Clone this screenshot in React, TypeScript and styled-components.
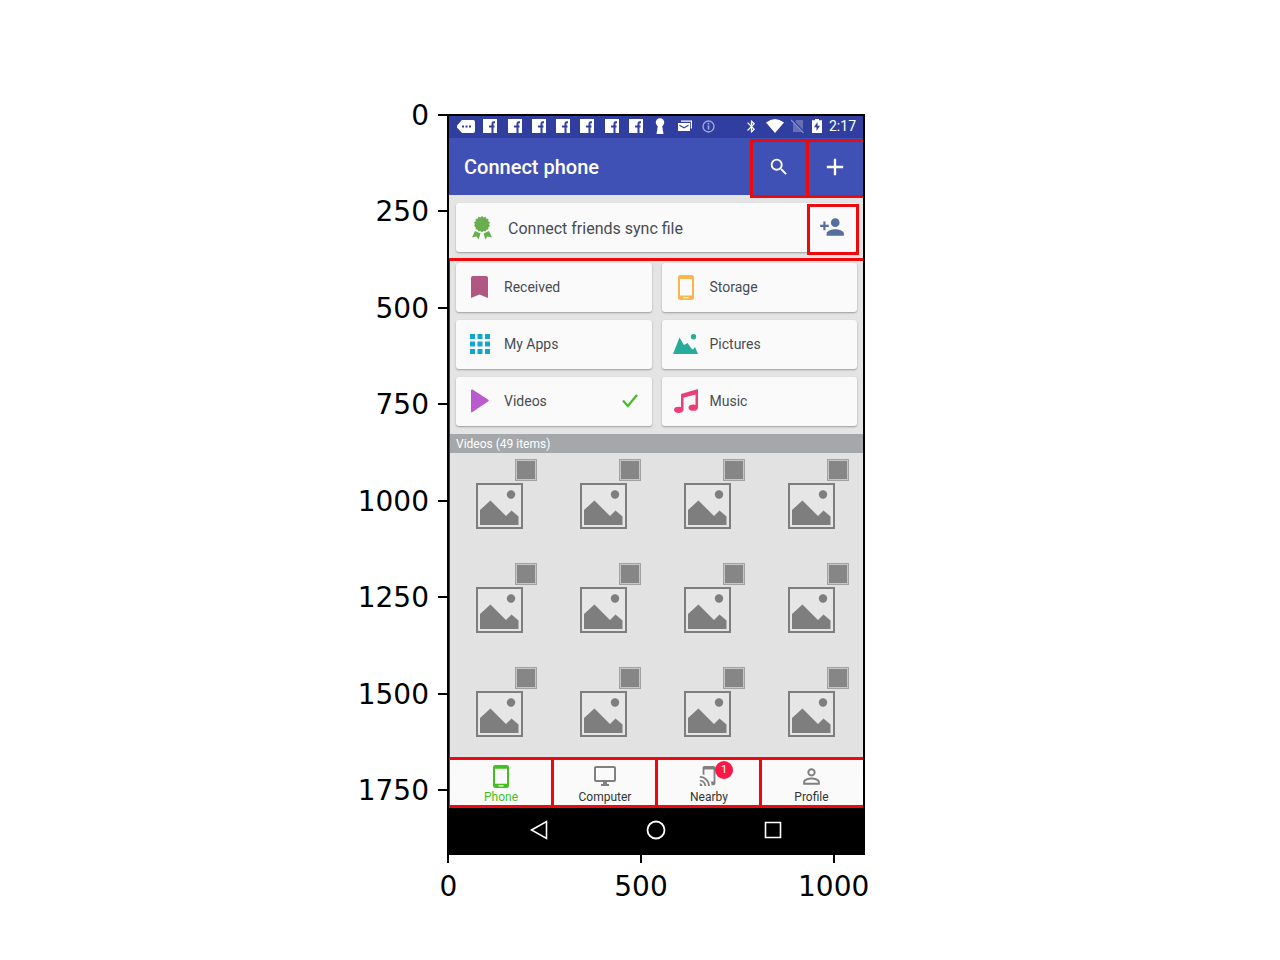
import React from 'react';
import styled, { createGlobalStyle } from 'styled-components';
import { MdAdd, MdBluetooth, MdOutlineDesktopWindows, MdPersonAdd, MdPersonOutline, MdSearch, MdTapAndPlay } from 'react-icons/md';

const MARK = '#ee0a0c';

const GlobalStyle = createGlobalStyle`
  *, *::before, *::after { box-sizing: border-box; }
  body { margin: 0; background: #fff; }
  svg { display: block; flex: none; }
  button { font: inherit; color: inherit; background: none; border: 0; padding: 0; cursor: pointer; }
`;

/* ---------- figure and axes ---------- */

const Figure = styled.main`
  display: grid;
  grid-template-columns: 1fr minmax(0, 418px) 1fr;
  padding: 114px 10% 56px 12.5%;
  font: 28px/28px 'DejaVu Sans', sans-serif;
  color: #000;
`;

const YAxis = styled.div`
  display: flex;
  flex-direction: column;
  margin-top: -12px;
  margin-bottom: 12px;
`;

const YTick = styled.div<{ $span: number }>`
  flex: ${(p) => p.$span} 0 0;
  display: flex;
  justify-content: flex-end;
  gap: 9px;
  &::after {
    content: '';
    width: 9px;
    height: 2px;
    margin-top: 12px;
    background: #000;
  }
`;

const XAxis = styled.div`
  grid-column: 2;
  display: flex;
  margin: 0 -65px 0 -95px;
`;

const XTick = styled.div`
  flex: 1;
  display: flex;
  flex-direction: column;
  align-items: center;
  gap: 10px;
  &::before {
    content: '';
    width: 2px;
    height: 8px;
    background: #000;
  }
`;

/* ---------- phone ---------- */

const Phone = styled.section`
  border: 2px solid #000;
  overflow: hidden;
  background: #e4e4e4;
  font: 14px/20px Roboto, sans-serif;
  color: #474c53;
`;

const StatusBar = styled.div`
  display: flex;
  align-items: center;
  justify-content: space-between;
  height: 22px;
  padding: 0 7px 2px 5px;
  background: #303f9f;
  color: #fff;
`;

const Notifications = styled.div`
  flex: 0 1 267px;
  display: grid;
  grid-template-columns: repeat(11, 1fr);
  place-items: center;
`;

const System = styled.div`
  display: flex;
  align-items: center;
  gap: 7px;
`;

const AppBar = styled.header`
  display: flex;
  align-items: flex-start;
  height: 57px;
  padding: 1px 0 0 15px;
  background: #3f51b5;
  color: #fff;
`;

const Title = styled.h1`
  flex: 1;
  margin: 0;
  font-size: 20px;
  line-height: 57px;
  font-weight: 500;
`;

const BarButton = styled.button<{ $last?: boolean }>`
  position: relative;
  display: grid;
  place-items: center;
  width: ${(p) => (p.$last ? 57 : 59)}px;
  height: 59px;
  margin-left: ${(p) => (p.$last ? -3 : 0)}px;
  padding: 0 2px 3px 0;
  border: 3px solid ${MARK};
  border-right-width: ${(p) => (p.$last ? 0 : 3)}px;
`;

const Card = styled.div`
  display: flex;
  align-items: center;
  height: 49px;
  border-radius: 3px;
  background: #fafafa;
  box-shadow: 0 1px 2px rgba(0, 0, 0, 0.32);
`;

const Friends = styled.div`
  padding: 8px 6px 6px 7px;
`;

const FriendsCard = styled(Card)`
  padding-left: 15px;
  font-size: 16px;
`;

const FriendsText = styled.span`
  flex: 1;
  padding: 2px 0 0 15px;
`;

const AddFriend = styled.button`
  display: grid;
  place-items: center;
  width: 52px;
  height: 51px;
  margin: 3px -2px 0 0;
  padding: 0 2px 4px 0;
  border: 3px solid ${MARK};
  color: #566f9c;
`;

const Library = styled.section`
  border-top: 3px solid ${MARK};
  border-left: 1px solid #8f1a1a;
`;

const Categories = styled.div`
  display: grid;
  grid-template-columns: 1fr 1fr;
  gap: 8px 10px;
  padding: 2px 6px 8px;
`;

const Category = styled(Card).attrs({ as: 'button' })`
  && {
    padding: 0 14px 1px 10px;
    background: #fafafa;
    text-align: left;
  }
`;

const IconSlot = styled.span<{ $tint?: string }>`
  display: grid;
  place-items: center;
  width: 28px;
  color: ${(p) => p.$tint ?? 'inherit'};
`;

const CategoryName = styled.span`
  flex: 1;
  padding-left: 10px;
`;

const GroupTitle = styled.h2`
  margin: 0;
  padding: 1px 6px 0;
  background: #a4a8ab;
  color: #fff;
  font-size: 12px;
  line-height: 18px;
  font-weight: 400;
`;

const Videos = styled.div`
  display: flex;
  flex-direction: column;
  gap: 34px;
  padding: 6px 14px 20px 26px;
  background: #e2e2e2;
`;

const VideoRow = styled.div`
  display: flex;
  justify-content: space-between;
`;

const Video = styled.label`
  display: flex;
  flex-direction: column;
  width: 61px;
  gap: 2px;
`;

const Tick = styled.input`
  appearance: none;
  align-self: flex-end;
  width: 22px;
  height: 22px;
  margin: 0;
  border: 1px solid #a2a2a2;
  background: #868686;
  box-shadow: inset 0 0 0 1px #c6c6c6;
`;

const Tabs = styled.nav`
  display: grid;
  grid-template-columns: 104px 1fr 1fr 101px;
  height: 51px;
  border: solid ${MARK};
  border-width: 3px 0 3px 1px;
  background: #fafafa;
`;

const Tab = styled.button<{ $active?: boolean }>`
  && {
    color: ${(p) => (p.$active ? '#43c01f' : '#333')};
    font-size: 12px;
    line-height: 14px;
  }
  display: flex;
  flex-direction: column;
  align-items: center;
  justify-content: space-between;
  padding: 3px 2px 1px 0;
  & + & { box-shadow: -3px 0 0 ${MARK}; }
`;

const TabIcon = styled.span<{ $active?: boolean }>`
  position: relative;
  display: grid;
  place-items: center;
  height: 26px;
  color: ${(p) => (p.$active ? '#43c01f' : '#808080')};
`;

const Badge = styled.span`
  position: absolute;
  top: -2px;
  left: 17px;
  width: 18px;
  border-radius: 50%;
  background: #fb1846;
  color: #fff;
  font-size: 11px;
  line-height: 18px;
  text-align: center;
`;

const SystemNav = styled.div`
  display: flex;
  justify-content: center;
  align-items: center;
  gap: 97px;
  height: 45px;
  padding-bottom: 2px;
  background: #000;
`;

/* ---------- drawings ---------- */

const Message = () => (
  <svg width="18" height="13" viewBox="0 0 18 13">
    <path d="M5 0h11q2 0 2 2v9q0 2-2 2H5L0 7.500v-2z" fill="#fff" />
    <path d="M5 5.500h2v2H5zm3.500 0h2v2h-2zm3.500 0h2v2h-2z" fill="#303f9f" />
  </svg>
);

const FacebookLogo = () => (
  <svg width="14" height="14" viewBox="0 0 14 14">
    <path d="M0 0h14v14H0z" fill="#fff" />
    <path d="M12 3.300h-1.300q-1.200 0-1.200 1.200V14M6 7.500h5.500" fill="none" stroke="#303f9f" strokeWidth="2" />
  </svg>
);

const Keyhole = () => (
  <svg width="10" height="16" viewBox="0 0 10 16" fill="#fff">
    <circle cx="5" cy="4.500" r="4.200" />
    <path d="M3 7h4l1.500 9h-7z" />
  </svg>
);

const Mail = () => (
  <svg width="14" height="12" viewBox="0 0 14 12">
    <path d="M3 .5h11v8h-1.200V1.700H3z" fill="#fff" />
    <path d="M0 3h12v8H0z" fill="#fff" />
    <path d="M1.500 5.300 6 7.800 10.500 5.300" fill="none" stroke="#303f9f" strokeWidth="1.100" />
  </svg>
);

const Info = () => (
  <svg width="13" height="13" viewBox="0 0 13 13" fill="none" stroke="#a5aedb" strokeWidth="1.300">
    <circle cx="6.500" cy="6.500" r="5.500" />
    <path d="M6.500 5.500v4M6.500 3v1.500" strokeWidth="1.600" />
  </svg>
);

const Wifi = () => (
  <svg width="18" height="14" viewBox="0 0 18 14">
    <path d="M0 3.500Q9-3.500 18 3.500L9 14z" fill="#fff" />
  </svg>
);

const NoSim = () => (
  <svg width="14" height="14" viewBox="0 0 14 14">
    <path d="M5.500 1H12v12H2V4.500z" fill="#6670b5" />
    <path d="M1 1l12 12.500" stroke="#303f9f" strokeWidth="2.500" />
    <path d="M0 1l12.500 13" stroke="#8a93cb" strokeWidth="1.200" />
  </svg>
);

const Battery = () => (
  <svg width="10" height="14" viewBox="0 0 10 14">
    <path d="M3 0h4v1.300h3V14H0V1.300h3z" fill="#fff" />
    <path d="M5.500 3 2 8.300h2.500V12L8 6.800H5.500z" fill="#303f9f" />
  </svg>
);

const badgePoints = Array.from({ length: 28 }, (_, i) => {
  const r = i % 2 ? 7 : 8.2;
  const a = (i * Math.PI) / 14;
  return `${(10 + r * Math.sin(a)).toFixed(2)},${(8.2 - r * Math.cos(a)).toFixed(2)}`;
}).join(' ');

const Award = () => (
  <svg width="22" height="24" viewBox="-1 0 22 24" fill="#68ae4e">
    <polygon points={badgePoints} />
    <path d="M3 15 8.500 17.500 6.500 23.500 4.500 20.500 0 21.500z" />
    <path d="M17 15 11.500 17.500 13.500 23.500 15.500 20.500 20 21.500z" />
  </svg>
);

const Bookmark = () => (
  <svg width="18" height="22" viewBox="0 0 18 22">
    <path d="M2 0h13q2 0 2 2v20l-8.500-3.500L0 22V2q0-2 2-2z" fill="#b05883" />
  </svg>
);

const Handset = ({ width = 16, height = 25 }: { width?: number; height?: number }) => (
  <svg width={width} height={height} viewBox="0 0 16 25" preserveAspectRatio="none">
    <path
      fillRule="evenodd"
      fill="currentColor"
      d="M2.500 0h11Q16 0 16 2.500v20q0 2.500-2.500 2.500h-11Q0 25 0 22.500v-20Q0 0 2.500 0zM2 4v16.500h12V4zM5.500 22v1.300h5V22z"
    />
  </svg>
);

const AppsGrid = () => (
  <svg width="20" height="20" viewBox="0 0 20 20" fill="#12a5cf">
    {[0, 7.5, 15].map((y) => [0, 7.5, 15].map((x) => <rect key={`${x}-${y}`} x={x} y={y} width="5" height="5" />))}
  </svg>
);

const Mountains = () => (
  <svg width="25" height="20" viewBox="0 0 25 20" fill="#27ac9b">
    <path d="M0 20 6.500 3.500 11 11 14.500 9 18.500 14.500 20 15.500 22 13 25 20z" />
    <circle cx="20.500" cy="2.700" r="2.700" />
  </svg>
);

const Play = () => (
  <svg width="18" height="24" viewBox="0 0 18 24">
    <path d="M0 1.500Q0 0 1.500 .5L17 10.500q1.500 1 0 2L1.500 23Q0 24 0 22.500z" fill="#ba5bcd" />
  </svg>
);

const Notes = () => (
  <svg width="24" height="24" viewBox="0 0 24 24" fill="#ea4078">
    <path d="M7 5 24 0v18.500h-2.500V5.500L9.500 8.800v12H7z" />
    <ellipse cx="4.700" cy="20.800" rx="4.700" ry="3.100" />
    <ellipse cx="19.200" cy="18.700" rx="4.700" ry="3.100" />
  </svg>
);

const Check = () => (
  <svg width="16" height="14" viewBox="0 0 16 14">
    <path d="M1 6.500 5.800 12 15 1" fill="none" stroke="#43c01f" strokeWidth="2.200" />
  </svg>
);

const Placeholder = () => (
  <svg width="47" height="46" viewBox="0 0 47 46">
    <rect x="1" y="1" width="45" height="44" fill="#e6e6e6" stroke="#7e7e7e" strokeWidth="2" />
    <path d="M4 27 14.500 17.500 30 33 35.500 27.500 42.500 33.500V42H4z" fill="#7e7e7e" />
    <circle cx="35" cy="11.500" r="4.200" fill="#7e7e7e" />
  </svg>
);

/* ---------- page ---------- */

const yTicks = [0, 250, 500, 750, 1000, 1250, 1500, 1750];
const xTicks = [0, 500, 1000];

const categories = [
  { name: 'Received', icon: <Bookmark /> },
  { name: 'Storage', icon: <Handset />, tint: '#f8b64c' },
  { name: 'My Apps', icon: <AppsGrid /> },
  { name: 'Pictures', icon: <Mountains /> },
  { name: 'Videos', icon: <Play />, selected: true },
  { name: 'Music', icon: <Notes /> },
];

export default function App() {
  return (
    <Figure>
      <GlobalStyle />
      <YAxis>
        {yTicks.map((t) => (
          <YTick key={t} $span={t === 1750 ? 170 : 250}>{t}</YTick>
        ))}
      </YAxis>
      <Phone>
        <StatusBar>
          <Notifications>
            <Message />
            {Array.from({ length: 7 }, (_, i) => <FacebookLogo key={i} />)}
            <Keyhole />
            <Mail />
            <Info />
          </Notifications>
          <System>
            <MdBluetooth size={15} />
            <Wifi />
            <NoSim />
            <Battery />
            <span>2:17</span>
          </System>
        </StatusBar>
        <AppBar>
          <Title>Connect phone</Title>
          <BarButton aria-label="Search"><MdSearch size={22} /></BarButton>
          <BarButton aria-label="Add" $last><MdAdd size={28} /></BarButton>
        </AppBar>
        <Friends>
          <FriendsCard>
            <Award />
            <FriendsText>Connect friends sync file</FriendsText>
            <AddFriend aria-label="Add friend"><MdPersonAdd size={26} /></AddFriend>
          </FriendsCard>
        </Friends>
        <Library>
          <Categories>
            {categories.map((c) => (
              <Category key={c.name}>
                <IconSlot $tint={c.tint}>{c.icon}</IconSlot>
                <CategoryName>{c.name}</CategoryName>
                {c.selected && <Check />}
              </Category>
            ))}
          </Categories>
          <GroupTitle>Videos (49 items)</GroupTitle>
          <Videos>
            {[0, 1, 2].map((row) => (
              <VideoRow key={row}>
                {[1, 2, 3, 4].map((n) => (
                  <Video key={n}>
                    <Tick type="checkbox" aria-label={`Select video ${row * 4 + n}`} />
                    <Placeholder />
                  </Video>
                ))}
              </VideoRow>
            ))}
          </Videos>
        </Library>
        <Tabs>
          <Tab $active><TabIcon $active><Handset width={16} height={23} /></TabIcon>Phone</Tab>
          <Tab><TabIcon><MdOutlineDesktopWindows size={24} /></TabIcon>Computer</Tab>
          <Tab><TabIcon><MdTapAndPlay size={22} /><Badge>1</Badge></TabIcon>Nearby</Tab>
          <Tab><TabIcon><MdPersonOutline size={25} /></TabIcon>Profile</Tab>
        </Tabs>
        <SystemNav>
          <button aria-label="Back">
            <svg width="20" height="20" viewBox="0 0 20 20"><path d="M2.500 10 17.500 1.500v17z" fill="none" stroke="#fff" strokeWidth="1.600" /></svg>
          </button>
          <button aria-label="Home">
            <svg width="20" height="20" viewBox="0 0 20 20"><circle cx="10" cy="10" r="8.500" fill="none" stroke="#fff" strokeWidth="1.800" /></svg>
          </button>
          <button aria-label="Recent apps">
            <svg width="20" height="20" viewBox="0 0 20 20"><path d="M2.500 2.500h15v15h-15z" fill="none" stroke="#fff" strokeWidth="1.600" /></svg>
          </button>
        </SystemNav>
      </Phone>
      <XAxis>
        {xTicks.map((t) => <XTick key={t}>{t}</XTick>)}
      </XAxis>
    </Figure>
  );
}
